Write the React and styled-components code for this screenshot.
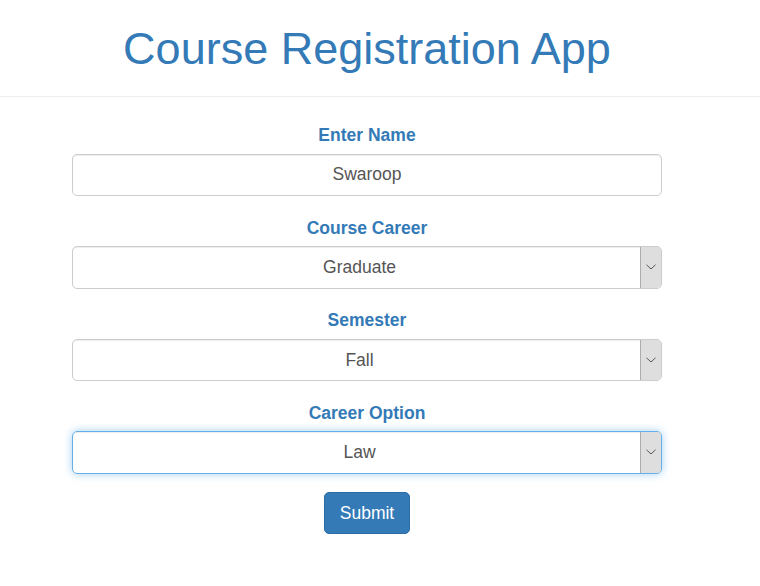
import React, { useState } from 'react';
import styled, { createGlobalStyle } from 'styled-components';

const GlobalStyle = createGlobalStyle`
  html, body {
    margin: 0;
    padding: 0;
    background: #fff;
    font-family: 'Liberation Sans', Arial, sans-serif;
    color: #333;
  }
`;

const Page = styled.div`
  width: 734px;
`;

const Header = styled.header`
  text-align: center;
  padding-top: 24px;
  padding-bottom: 22.5px;
  border-bottom: 1px solid #eee;
  width: 760px;
  box-sizing: border-box;

  h1 {
    width: 734px;
    margin: 0;
    font-size: 45px;
    line-height: 49.5px;
    font-weight: 400;
    color: #337ab7;
  }
`;

const Form = styled.form`
  width: 590px;
  margin: 25.4px auto 0;
  display: flex;
  flex-direction: column;
  align-items: center;
`;

const Group = styled.div`
  width: 100%;
  display: flex;
  flex-direction: column;
  align-items: center;
  margin-bottom: 18.75px;
`;

const Label = styled.label`
  font-size: 17.5px;
  line-height: 25px;
  font-weight: 700;
  color: #337ab7;
  padding-top: 1px;
  margin-bottom: 5.25px;
`;

const fieldBase = `
  width: 100%;
  height: 42.5px;
  box-sizing: border-box;
  border: 1px solid #ccc;
  border-radius: 5px;
  background: #fff;
  color: #555;
  font-family: 'Liberation Sans', Arial, sans-serif;
  font-size: 17.5px;
  text-align: center;
  outline: none;
  box-shadow: inset 0 1px 1px rgba(0, 0, 0, 0.075);
`;

const TextInput = styled.input`
  ${fieldBase}
  padding: 7.5px 15px;
`;

const SelectWrap = styled.div`
  position: relative;
  width: 100%;
  border-radius: 5px;
  box-shadow: ${p => p.$focused ? '0 0 8px rgba(102, 175, 233, 0.6)' : 'none'};
`;

const Select = styled.select`
  ${fieldBase}
  appearance: none;
  padding: 7.5px 30px 7.5px 15px;
  text-align-last: center;
  border-color: ${p => p.$focused ? '#66afe9' : '#ccc'};
`;

const ArrowBox = styled.span`
  position: absolute;
  top: 1px;
  right: 1px;
  bottom: 1px;
  width: 20px;
  background: #dedede;
  border-left: 1px solid #acacac;
  border-radius: 0 4px 4px 0;
  display: flex;
  align-items: center;
  justify-content: center;
  pointer-events: none;
`;

const SubmitButton = styled.button`
  padding: 7.5px 15px;
  font-family: 'Liberation Sans', Arial, sans-serif;
  font-size: 17.5px;
  line-height: 25px;
  color: #fff;
  background: #337ab7;
  border: 1px solid #2e6da4;
  border-radius: 5px;
  cursor: pointer;
`;

const Chevron = () => (
  <svg width="10" height="6" viewBox="0 0 10 6">
    <path d="M0.5 0.8 L5 5 L9.5 0.8" fill="none" stroke="#555" strokeWidth="1" />
  </svg>
);

function Dropdown({ value, options, focused }) {
  return (
    <SelectWrap $focused={focused}>
      <Select $focused={focused} defaultValue={value}>
        {options.map(o => <option key={o}>{o}</option>)}
      </Select>
      <ArrowBox><Chevron /></ArrowBox>
    </SelectWrap>
  );
}

export default function App() {
  const [name, setName] = useState('Swaroop');

  return (
    <>
      <GlobalStyle />
      <Page>
        <Header>
          <h1>Course Registration App</h1>
        </Header>
        <Form onSubmit={e => e.preventDefault()}>
          <Group>
            <Label>Enter Name</Label>
            <TextInput value={name} onChange={e => setName(e.target.value)} />
          </Group>
          <Group>
            <Label>Course Career</Label>
            <Dropdown value="Graduate" options={['Undergraduate', 'Graduate']} />
          </Group>
          <Group>
            <Label>Semester</Label>
            <Dropdown value="Fall" options={['Fall', 'Spring', 'Summer']} />
          </Group>
          <Group>
            <Label>Career Option</Label>
            <Dropdown value="Law" options={['Engineering', 'Business', 'Law']} focused />
          </Group>
          <SubmitButton type="submit">Submit</SubmitButton>
        </Form>
      </Page>
    </>
  );
}
